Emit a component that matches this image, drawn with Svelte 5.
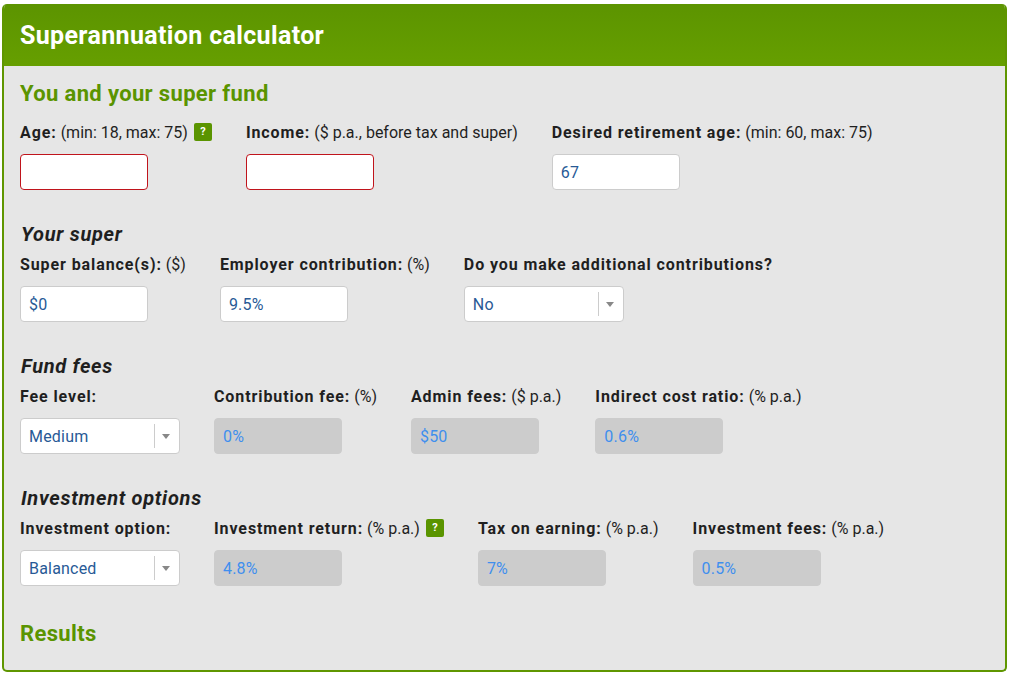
<script>
  const sections = [
    {
      title: "Your super",
      fields: [
        { label: "Super balance(s):", note: "($)", value: "$0" },
        { label: "Employer contribution:", note: "(%)", value: "9.5%" },
        { label: "Do you make additional contributions?", value: "No", select: true, width: "short" }
      ]
    },
    {
      title: "Fund fees",
      fields: [
        { label: "Fee level:", value: "Medium", select: true },
        { label: "Contribution fee:", note: "(%)", value: "0%", disabled: true },
        { label: "Admin fees:", note: "($ p.a.)", value: "$50", disabled: true },
        { label: "Indirect cost ratio:", note: "(% p.a.)", value: "0.6%", disabled: true }
      ]
    },
    {
      title: "Investment options",
      fields: [
        { label: "Investment option:", value: "Balanced", select: true },
        { label: "Investment return:", note: "(% p.a.)", value: "4.8%", disabled: true, help: true },
        { label: "Tax on earning:", note: "(% p.a.)", value: "7%", disabled: true },
        { label: "Investment fees:", note: "(% p.a.)", value: "0.5%", disabled: true }
      ]
    }
  ];

  const about = [
    { label: "Age:", note: "(min: 18, max: 75)", value: "", error: true, help: true },
    { label: "Income:", note: "($ p.a., before tax and super)", value: "", error: true },
    { label: "Desired retirement age:", note: "(min: 60, max: 75)", value: "67" }
  ];
</script>

{#snippet field(f)}
  <div class="field">
    <div class="label">
      <b>{f.label}</b>
      {#if f.note}<span class="note">{f.note}</span>{/if}
      {#if f.help}<span class="help">?</span>{/if}
    </div>
    {#if f.select}
      <div class="select">
        <span class="select-value">{f.value}</span>
        <span class="select-arrow"></span>
      </div>
    {:else}
      <input
        type="text"
        value={f.value}
        disabled={f.disabled}
        class:error={f.error}
      />
    {/if}
  </div>
{/snippet}

<div class="panel">
  <header>Superannuation calculator</header>
  <div class="body">
    <h2 class="first">You and your super fund</h2>
    <div class="row">
      {#each about as f}
        {@render field(f)}
      {/each}
    </div>

    {#each sections as section}
      <h3>{section.title}</h3>
      <div class="row">
        {#each section.fields as f}
          {@render field(f)}
        {/each}
      </div>
    {/each}

    <h2 class="results">Results</h2>
  </div>
</div>

<style>
  :global(body) {
    background: #fff;
    font-family: Roboto, "Liberation Sans", sans-serif;
  }

  .panel {
    margin: 4px 2px 0;
    height: 668px;
    box-sizing: border-box;
    border: 2px solid #5f9600;
    border-top: 0;
    border-radius: 5px;
    background: #e6e6e6;
    overflow: hidden;
  }

  header {
    height: 62px;
    margin: 0 -2px;
    padding-left: 18px;
    background: linear-gradient(#5c9400, #669f00);
    color: #fff;
    font-size: 25px;
    font-weight: 700;
    letter-spacing: 0.35px;
    line-height: 64px;
  }

  .body {
    padding: 0 16px;
  }

  h2 {
    margin: 0;
    padding-top: 15px;
    color: #5a9400;
    font-size: 22px;
    font-weight: 700;
    letter-spacing: 0.35px;
    line-height: 26px;
  }

  h2.first {
    padding-bottom: 7px;
  }

  h3 {
    margin: 0;
    padding-top: 32px;
    padding-left: 1px;
    color: #1f1f1f;
    font-size: 20px;
    font-style: italic;
    font-weight: 700;
    letter-spacing: 0.7px;
    line-height: 24px;
  }

  .results {
    padding-top: 35px;
  }

  .row {
    display: flex;
    gap: 34px;
  }

  .label {
    display: flex;
    align-items: center;
    height: 20px;
    margin: 8px 0 12px;
    color: #1f1f1f;
    font-size: 16px;
    white-space: nowrap;
  }

  .label b {
    font-weight: 700;
    letter-spacing: 0.9px;
  }

  .note {
    margin-left: 4px;
    font-size: 16px;
  }

  .help {
    width: 18px;
    height: 18px;
    margin-left: 6px;
    border-radius: 2px;
    background: #5a9400;
    color: #fff;
    font-size: 11px;
    font-weight: 700;
    line-height: 18px;
    text-align: center;
  }

  input,
  .select {
    display: block;
    box-sizing: border-box;
    height: 36px;
    border: 1px solid #ccc;
    border-radius: 4px;
    background: #fff;
    color: #285a96;
    font-family: inherit;
    font-size: 16px;
    letter-spacing: 0.2px;
  }

  input {
    width: 128px;
    padding: 0 8px;
    outline: 0;
  }

  input.error {
    border-color: #c0141c;
  }

  input:disabled {
    border-color: #ccc;
    background: #ccc;
    color: #3f8fee;
    opacity: 1;
    -webkit-text-fill-color: #3f8fee;
  }

  .select {
    display: flex;
    align-items: center;
    width: 160px;
    padding-left: 8px;
  }

  .select-value {
    flex: 1;
  }

  .select-arrow {
    position: relative;
    width: 24px;
    height: 24px;
    border-left: 1px solid #ccc;
  }

  .select-arrow::after {
    content: "";
    position: absolute;
    top: 10px;
    left: 7px;
    border: 4.5px solid transparent;
    border-top: 5px solid #888;
    border-bottom: 0;
  }
</style>
